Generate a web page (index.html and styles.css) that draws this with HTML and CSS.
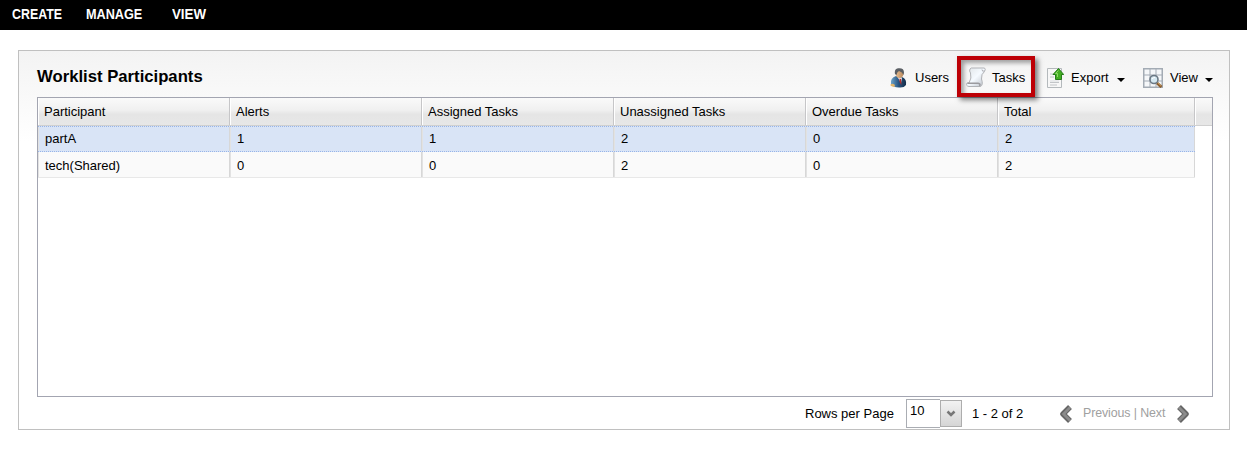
FILE: index.html
```html
<!DOCTYPE html>
<html lang="en">
<head>
<meta charset="utf-8">
<title>Worklist Participants</title>
<link rel="stylesheet" href="styles.css">
</head>
<body>
<nav class="menu">
  <span class="m-create">CREATE</span><span class="m-manage">MANAGE</span><span class="m-view">VIEW</span>
</nav>
<main class="panel">
  <header class="head">
    <h1>Worklist Participants</h1>
    <div class="tools">
      <div class="tool users">
        <svg width="17" height="20" viewBox="0 0 17 20">
          <defs><linearGradient id="suit" x1="0" x2="1"><stop offset="0" stop-color="#6fa5cb"/><stop offset=".5" stop-color="#285582"/><stop offset="1" stop-color="#142c48"/></linearGradient>
          <linearGradient id="face" x1="0" x2="1"><stop offset="0" stop-color="#e8be91"/><stop offset="1" stop-color="#b98a5f"/></linearGradient></defs>
          <path d="M1 16Q0 10 6 8L12 9Q17 11 16 17Q14 20 9 19.500Q3 19.500 1 16Z" fill="url(#suit)"/>
          <path d="M7.500 9L12 9.500L11 15Z" fill="#eef3f7"/><path d="M9.500 10.500L11 11L11.500 17L9.500 14Z" fill="#b72a2a"/>
          <path d="M0.500 16.500Q2 15 4.500 16.500L5 18.500Q3 19.500 .5 17.500Z" fill="#e3b66b"/>
          <ellipse cx="9.500" cy="5.500" rx="4" ry="4.500" fill="url(#face)"/>
          <path d="M5 6Q4 1 8 .3Q14 -.5 14 4.500L13.500 7Q12.500 4 9 3Q7 4 6.500 7Z" fill="#5b5f64"/>
        </svg><span>Users</span></div>
      <div class="tool tasks">
        <svg width="20" height="21" viewBox="0 0 20 21">
          <defs><linearGradient id="scroll" x1="0" x2="1" y2="1"><stop offset="0" stop-color="#dfe3e6"/><stop offset=".5" stop-color="#f5faff"/><stop offset="1" stop-color="#b9bec6"/></linearGradient></defs>
          <path d="M4 2Q5 .5 7 1H18.500Q20 2 18.500 4.500Q15 7 15.500 12Q17.500 18 14.500 19.500H3Q-.5 19 1 16H3Q6 11 4.500 6Q3 4 4 2Z" fill="url(#scroll)" stroke="#b0b2b6"/>
          <path d="M1.500 16.200H12Q15 16.500 13.500 19" fill="none" stroke="#9b9b9f" stroke-width="1.500"/><path d="M16 2.500Q16 5 18.500 4" fill="none" stroke="#b0b0b5"/>
        </svg><span>Tasks</span></div>
      <div class="tool export">
        <svg width="17" height="20" viewBox="0 0 17 20">
          <path d="M.5.5H14.500V19.500H.5Z" fill="#f7f7f7" stroke="#b4b9bc"/>
          <path d="M3 6H6M3 9H7M3 14.500H12M3 17H10" stroke="#c2c5c8"/><path d="M3 13H12" stroke="#dadde0"/>
          <path d="M11.500.5L16.700 6.500H14.500V11.500H8.500V6.500H6Z" fill="#43ae22" stroke="#267c1b"/><path d="M11.500 2.500L8.500 5.500H10.500V9" fill="none" stroke="#8bd865"/>
        </svg><span>Export</span><i class="arrow"></i></div>
      <div class="tool view">
        <svg width="20" height="20" viewBox="0 0 20 20">
          <path d="M0 0H20V20H0Z" fill="#a3abb4"/>
          <path d="M1.500 1.500H6.500V6.500H1.500ZM7.500 1.500H12.500V6.500H7.500ZM13.500 1.500H18.500V6.500H13.500ZM1.500 7.500H6.500V12.500H1.500ZM7.500 7.500H12.500V12.500H7.500ZM13.500 7.500H18.500V12.500H13.500ZM1.500 13.500H6.500V18.500H1.500ZM7.500 13.500H12.500V18.500H7.500ZM13.500 13.500H18.500V18.500H13.500Z" fill="#f5f7f9"/>
          <path d="M14 15L18.500 19" stroke="#8d6031" stroke-width="3"/><path d="M14.500 14.500L18 17.500" stroke="#d0a567"/>
          <circle cx="11" cy="11.500" r="4" fill="#d5e8f1" stroke="#6b7884" stroke-width="1.600"/><path d="M9 11Q10 9.500 12 9.500" fill="none" stroke="#fff"/>
        </svg><span>View</span><i class="arrow"></i></div>
    </div>
  </header>
  <section class="grid">
    <div class="row header"><div>Participant</div><div>Alerts</div><div>Assigned Tasks</div><div>Unassigned Tasks</div><div>Overdue Tasks</div><div>Total</div><div></div></div>
    <div class="row data selected"><div>partA</div><div>1</div><div>1</div><div>2</div><div>0</div><div>2</div></div>
    <div class="row data"><div>tech(Shared)</div><div>0</div><div>0</div><div>2</div><div>0</div><div>2</div></div>
  </section>
  <footer class="pager">
    <span class="rpp">Rows per Page</span>
    <div class="combo"><span class="value">10</span><span class="trigger"><svg width="10" height="7" viewBox="0 0 10 7"><path d="M1.500 1.500L5 5L8.500 1.500" fill="none" stroke="#777" stroke-width="2.500"/></svg></span></div>
    <span class="count">1 - 2 of 2</span>
    <svg class="prev" width="14" height="20" viewBox="0 0 14 20"><path d="M11 3L4 10L11 17" fill="none" stroke="#666" stroke-width="5.500" stroke-linejoin="round"/><path d="M11 3.500L4.500 10L11 16.500" fill="none" stroke="#8c8c8c" stroke-width="2.500"/></svg>
    <span class="links">Previous | Next</span>
    <svg class="next" width="14" height="20" viewBox="0 0 14 20"><path d="M3 3L10 10L3 17" fill="none" stroke="#666" stroke-width="5.500" stroke-linejoin="round"/><path d="M3 3.500L9.500 10L3 16.500" fill="none" stroke="#8c8c8c" stroke-width="2.500"/></svg>
  </footer>
</main>
</body>
</html>
```
FILE: styles.css
```css
* { box-sizing: border-box; }
body { margin: 0; background: #fff; color: #000; font: 13px/16px "Liberation Sans", Arial, sans-serif; }
.menu { height: 30px; background: #000; color: #fff; display: flex; padding: 6px 0 0 12px; font-size: 14px; font-weight: bold; }
.menu span { transform-origin: left; }
.m-create { width: 74px; transform: scaleX(.885); }
.m-manage { width: 86px; transform: scaleX(.905); }
.m-view { transform: scaleX(.95); }
.panel { margin: 20px 0 0 18px; width: 1212px; height: 380px; border: 1px solid #c0c0c0; padding: 0 17px 0 18px; background: linear-gradient(#f3f3f3, #fff 90px); }
.head { height: 46px; display: flex; justify-content: space-between; }
h1 { margin: 16px 0 0; font-size: 16.7px; line-height: 20px; }
.tools { display: flex; align-items: flex-start; padding-top: 5px; margin-right: -1px; }
.tool { display: flex; align-items: center; height: 44px; white-space: nowrap; }
.users svg { margin-right: 8px; }
.users { width: 67px; }
.tasks { width: 78px; height: 41px; border: 4px solid #bd0006; padding: 2px 0 0 5px; box-shadow: 3px 3px 5px rgba(0, 0, 0, .5), inset 3px 3px 4px rgba(0, 0, 0, .35); position: relative; }
.tasks svg { margin-right: 6px; }
.export { width: 108px; padding-left: 12px; }
.export svg { margin-right: 7px; }
.view { width: 70px; }
.view svg { margin-right: 7px; }
.view .arrow { margin-left: 7px; }
.arrow { border: 4px solid transparent; border-top: 4px solid #000; border-bottom: 0; margin: 3px 0 0 8px; }
.grid { width: 1176px; height: 300px; border: 1px solid #a3a5b1; background: #fff; }
.row { display: grid; grid-template-columns: repeat(5, 192px) 197px 17px; }
.header { height: 28px; border-bottom: 1px solid #d0d0d0; background: linear-gradient(#fafafa, #f0f0f0 45%, #e5e5e5 60%, #e7e7e7); }
.header > div { border-right: 1px solid #c6c6c8; border-left: 1px solid #fff; padding: 6px 0 0 5px; }
.header > div:last-child { border-right: 0; }
.data { height: 26px; width: 1157px; grid-template-columns: repeat(5, 192px) 197px; background: #fafafa; border-bottom: 1px solid #e8e8e8; }
.data > div { border-right: 1px solid #d7d7d7; border-left: 1px solid #e2e2e2; padding: 6px 0 0 6px; }
.data.selected { background: #d9e4f6; border-top: 1px dotted #98b5e8; border-bottom: 1px dotted #98b5e8; }
.data.selected > div { padding-top: 4px; }
.pager { display: flex; align-items: flex-start; height: 32px; padding-left: 768px; }
.rpp, .count { padding-top: 9px; white-space: nowrap; }
.rpp { width: 101px; }
.combo { display: flex; width: 66px; padding-top: 2px; }
.value { width: 34px; height: 29px; border: 1px solid #aaadb3; border-right: 0; padding: 3px 0 0 3px; background: #fff; }
.trigger { width: 22px; height: 27px; margin-top: 1px; border: 1px solid #adadad; background: linear-gradient(#f2f2f2, #d5d5d5); display: flex; align-items: center; justify-content: center; }
.count { width: 87px; }
.prev, .next { margin-top: 7px; flex: none; }
.links { width: 103px; padding: 8px 0 0 10px; font-size: 12.4px; letter-spacing: -.1px; color: #a0a0a0; white-space: nowrap; }
```
